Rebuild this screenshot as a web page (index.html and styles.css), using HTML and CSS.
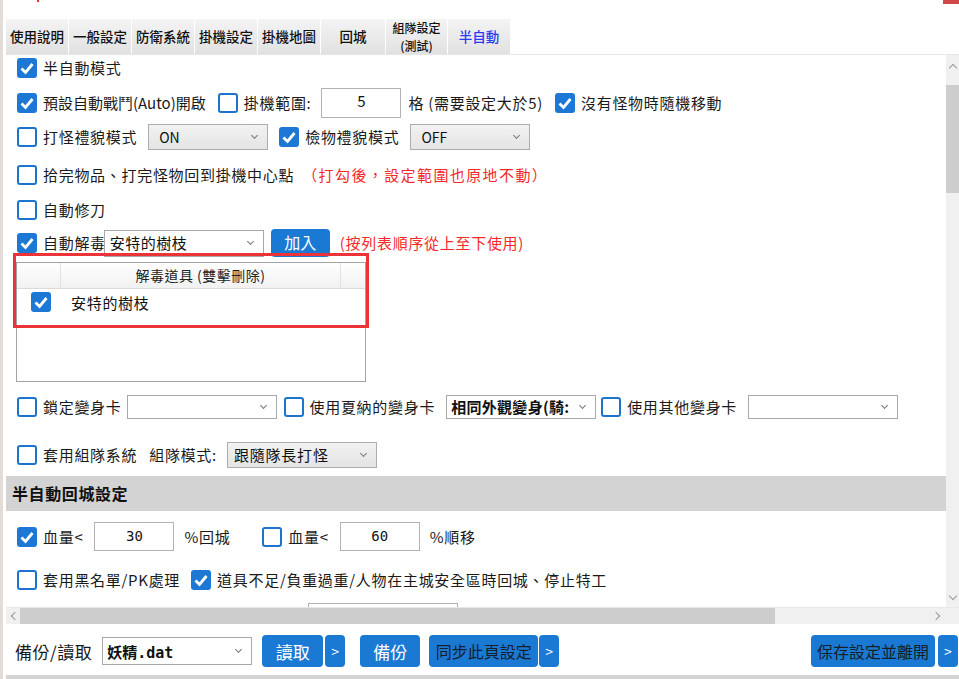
FILE: index.html
```html
<!DOCTYPE html>
<html lang="zh-Hant">
<head>
    <meta charset="UTF-8">
    <title>半自動設定</title>
    <link rel="stylesheet" href="styles.css">
</head>
<body>
    <div class="window">
        <!-- 標題列殘影 -->
        <div class="titlebar">
            <span class="tick"></span>
            <span class="close"></span>
        </div>

        <!-- 分頁 -->
        <div class="tabs">
            <div class="tab">使用說明</div>
            <div class="tab">一般設定</div>
            <div class="tab">防衛系統</div>
            <div class="tab">掛機設定</div>
            <div class="tab">掛機地圖</div>
            <div class="tab wide">回城</div>
            <div class="tab two-line"><span>組隊設定</span><span>(測試)</span></div>
            <div class="tab active">半自動</div>
        </div>

        <div class="panel">
            <div class="view">
                <div class="row r1">
                    <span class="cb on"><svg viewBox="0 0 20 20"><path d="M4.5 10.5 L8.5 14.5 L15.5 6"/></svg></span>
                    <span class="lbl">半自動模式</span>
                </div>

                <div class="row r2">
                    <span class="cb on"><svg viewBox="0 0 20 20"><path d="M4.5 10.5 L8.5 14.5 L15.5 6"/></svg></span>
                    <span class="lbl tight">預設自動戰鬥(Auto)開啟</span>
                    <span class="cb ml12"></span>
                    <span class="lbl">掛機範圍:</span>
                    <span class="field num-in ml10">5</span>
                    <span class="lbl ml7">格 (需要設定大於5)</span>
                    <span class="cb on ml12"><svg viewBox="0 0 20 20"><path d="M4.5 10.5 L8.5 14.5 L15.5 6"/></svg></span>
                    <span class="lbl">沒有怪物時隨機移動</span>
                </div>

                <div class="row r3">
                    <span class="cb"></span>
                    <span class="lbl">打怪禮貌模式</span>
                    <span class="select gray mode ml11">ON</span>
                    <span class="cb on ml11"><svg viewBox="0 0 20 20"><path d="M4.5 10.5 L8.5 14.5 L15.5 6"/></svg></span>
                    <span class="lbl">檢物禮貌模式</span>
                    <span class="select gray mode ml11">OFF</span>
                </div>

                <div class="row r4">
                    <span class="cb"></span>
                    <span class="lbl">拾完物品、打完怪物回到掛機中心點</span>
                    <span class="warn wide-warn ml8">（打勾後，設定範圍也原地不動）</span>
                </div>

                <div class="row r5">
                    <span class="cb"></span>
                    <span class="lbl">自動修刀</span>
                </div>

                <div class="row r6">
                    <span class="cb on"><svg viewBox="0 0 20 20"><path d="M4.5 10.5 L8.5 14.5 L15.5 6"/></svg></span>
                    <span class="lbl">自動解毒</span>
                    <span class="select cure">安特的樹枝</span>
                    <span class="btn add ml7">加入</span>
                    <span class="warn ml10">(按列表順序從上至下使用)</span>
                </div>

                <div class="list-wrap">
                    <div class="list">
                        <div class="list-head">
                            <span class="col-a"></span>
                            <span class="col-b">解毒道具 (雙擊刪除)</span>
                            <span class="col-c"></span>
                        </div>
                        <div class="list-item">
                            <span class="cb on"><svg viewBox="0 0 20 20"><path d="M4.5 10.5 L8.5 14.5 L15.5 6"/></svg></span>
                            <span class="item-name">安特的樹枝</span>
                        </div>
                    </div>
                    <div class="mark"></div>
                </div>

                <div class="row r7">
                    <span class="cb"></span>
                    <span class="lbl">鎖定變身卡</span>
                    <span class="select card ml5"></span>
                    <span class="cb ml7"></span>
                    <span class="lbl">使用夏納的變身卡</span>
                    <span class="select card bold ml11">相同外觀變身(騎:</span>
                    <span class="cb ml5"></span>
                    <span class="lbl">使用其他變身卡</span>
                    <span class="select card ml11"></span>
                </div>

                <div class="row r8">
                    <span class="cb"></span>
                    <span class="lbl">套用組隊系統</span>
                    <span class="lbl ml12">組隊模式:</span>
                    <span class="select gray party ml10">跟隨隊長打怪</span>
                </div>

                <div class="section">半自動回城設定</div>

                <div class="row r9">
                    <span class="cb on"><svg viewBox="0 0 20 20"><path d="M4.5 10.5 L8.5 14.5 L15.5 6"/></svg></span>
                    <span class="lbl">血量&lt;</span>
                    <span class="field mono ml11">30</span>
                    <span class="lbl ml10">%回城</span>
                    <span class="cb ml32"></span>
                    <span class="lbl">血量&lt;</span>
                    <span class="field mono ml11">60</span>
                    <span class="lbl ml10">%順移</span>
                </div>

                <div class="row r10">
                    <span class="cb"></span>
                    <span class="lbl">套用黑名單/PK處理</span>
                    <span class="cb on ml11"><svg viewBox="0 0 20 20"><path d="M4.5 10.5 L8.5 14.5 L15.5 6"/></svg></span>
                    <span class="lbl">道具不足/負重過重/人物在主城安全區時回城、停止特工</span>
                </div>

                <div class="row r11">
                    <span class="field cut"></span>
                </div>
            </div>

            <!-- 垂直捲軸 -->
            <div class="vbar">
                <span class="chev up"></span>
                <div class="vthumb"></div>
                <span class="chev down"></span>
            </div>

            <!-- 水平捲軸 -->
            <div class="hbar">
                <span class="chev left"></span>
                <div class="hthumb"></div>
                <span class="chev right"></span>
            </div>
        </div>

        <!-- 備份/讀取 -->
        <div class="footer">
            <span class="foot-lbl">備份/讀取</span>
            <span class="select file ml10">妖精.dat</span>
            <span class="btn load ml10">讀取</span>
            <span class="btn more ml2">&gt;</span>
            <span class="btn backup ml15">備份</span>
            <span class="btn sync dark ml9">同步此頁設定</span>
            <span class="btn more ml1">&gt;</span>
            <span class="spacer"></span>
            <span class="btn save dark">保存設定並離開</span>
            <span class="btn more ml3">&gt;</span>
        </div>
    </div>
</body>
</html>
```

FILE: styles.css
```css
body {
    margin: 0;
    background: #fff;
    font-family: "Noto Sans CJK TC", "Noto Sans", sans-serif;
    color: #111;
    overflow: hidden;
}
.window {
    width: 959px;
    height: 679px;
    border-left: 3px solid #e2dcd6;
    box-sizing: border-box;
    padding-left: 3px;
    position: relative;
    background: #fff;
}
.titlebar {
    height: 19px;
}
.tick {
    position: absolute;
    left: 34px;
    top: 0;
    width: 2px;
    height: 2px;
    background: #d23a2a;
}
.close {
    position: absolute;
    right: 0;
    top: 0;
    width: 16px;
    height: 4px;
    background: #d04848;
}

/* 分頁 */
.tabs {
    display: flex;
    height: 35px;
    border-bottom: 1px solid #e6e6e6;
}
.tab {
    width: 62px;
    margin-right: 1px;
    background: linear-gradient(#f4f4f4, #e1e1e1);
    font-size: 13.5px;
    font-weight: 500;
    line-height: 1.2;
    display: flex;
    align-items: center;
    justify-content: center;
    text-align: center;
    color: #111;
}
.tab.wide {
    width: 64px;
}
.tab.two-line {
    width: 61px;
    flex-direction: column;
    font-size: 12px;
    line-height: 17.5px;
}
.tab.active {
    color: #2a3cf0;
}

/* 內容區 */
.panel {
    display: grid;
    grid-template-columns: 940px 13px;
    grid-template-rows: 552px 17px;
}
.view {
    overflow: hidden;
    background: #fff;
}
.row {
    display: flex;
    align-items: center;
    padding-left: 11px;
    font-size: 15px;
    line-height: 1.2;
    white-space: nowrap;
}
.r1 { margin-top: 2px; height: 22px; }
.r2 { margin-top: 9px; height: 30px; }
.r3 { margin-top: 6px; height: 26px; }
.r4 { margin-top: 13px; height: 24px; }
.r5 { margin-top: 11px; height: 24px; }
.r6 { margin-top: 7px; height: 28px; }
.r7 { margin-top: 13px; height: 24px; }
.r8 { margin-top: 23px; height: 26px; }
.r9 { margin-top: 11px; height: 29px; }
.r10 { margin-top: 17px; height: 24px; }
.r11 { margin-top: 11px; height: 26px; }

.ml1 { margin-left: 1px; }
.ml2 { margin-left: 2px; }
.ml3 { margin-left: 3px; }
.ml5 { margin-left: 5px; }
.ml7 { margin-left: 7px; }
.ml8 { margin-left: 8px; }
.ml9 { margin-left: 9px; }
.ml10 { margin-left: 10px; }
.ml11 { margin-left: 11px; }
.ml12 { margin-left: 12px; }
.ml15 { margin-left: 15px; }
.ml32 { margin-left: 32px; }

/* 核取方塊 */
.cb {
    flex: none;
    width: 20px;
    height: 20px;
    box-sizing: border-box;
    border: 2px solid #1c74cf;
    border-radius: 3px;
    background: #fff;
    display: inline-flex;
}
.cb.on {
    background: #1c78d4;
    border-color: #1c78d4;
}
.cb svg {
    width: 20px;
    height: 20px;
    margin: -2px;
}
.cb path {
    fill: none;
    stroke: #fff;
    stroke-width: 2.8;
}
.lbl {
    margin-left: 6px;
    letter-spacing: 0.7px;
    color: #1a1a1a;
}
.lbl.tight {
    letter-spacing: 0;
}
.row .lbl.ml7 { margin-left: 7px; }
.row .lbl.ml10 { margin-left: 10px; }
.row .lbl.ml12 { margin-left: 12px; }
.warn {
    color: #f42a2a;
    letter-spacing: 0.7px;
}
.wide-warn {
    letter-spacing: 1.4px;
}

/* 輸入框與下拉選單 */
.field {
    flex: none;
    width: 80px;
    height: 29px;
    box-sizing: border-box;
    border: 1px solid #b2b2b2;
    background: #fff;
    display: flex;
    align-items: center;
    justify-content: center;
    font-size: 15px;
}
.num-in {
    height: 30px;
    padding-bottom: 4px;
}
.mono {
    font-family: "DejaVu Sans Mono", "Liberation Mono", monospace;
    font-size: 14px;
}
.field.cut {
    margin-left: 291px;
    width: 150px;
    height: 26px;
}
.select {
    flex: none;
    position: relative;
    box-sizing: border-box;
    border: 1px solid #a8a8a8;
    background: #fff;
    display: flex;
    align-items: center;
    padding-left: 6px;
    font-size: 15px;
    color: #111;
}
.select::after {
    content: "";
    position: absolute;
    right: 10px;
    top: 50%;
    width: 4px;
    height: 4px;
    border-right: 1px solid #777;
    border-bottom: 1px solid #777;
    transform: translateY(-4px) rotate(45deg);
}
.select.gray {
    background: linear-gradient(#f2f2f2, #e4e4e4);
    border-color: #adadad;
}
.mode {
    width: 120px;
    height: 26px;
    padding-left: 10px;
    font-size: 14px;
}
.cure {
    width: 160px;
    height: 27px;
    margin-left: -2px;
    padding-left: 5px;
    letter-spacing: 0.5px;
}
.card {
    width: 150px;
    height: 24px;
}
.card.bold {
    font-weight: 700;
    padding-left: 4px;
    letter-spacing: 0.3px;
}
.party {
    width: 150px;
    height: 26px;
    letter-spacing: 0.8px;
}

/* 按鈕 */
.btn {
    flex: none;
    background: #1a7ad3;
    color: #fff;
    border-radius: 4px;
    display: flex;
    align-items: center;
    justify-content: center;
    font-size: 17px;
    height: 32px;
}
.btn.add {
    width: 59px;
    height: 28px;
    font-size: 16px;
}
.btn.dark {
    color: #15202c;
}

/* 解毒清單 */
.list-wrap {
    position: relative;
    margin: 5px 0 0 10px;
    width: 350px;
}
.list {
    height: 120px;
    box-sizing: border-box;
    border: 1px solid #a0a4a8;
    background: #fff;
}
.list-head {
    display: flex;
    height: 25px;
    background: linear-gradient(#fff, #f1f1f1);
    border-bottom: 1px solid #dadada;
    font-size: 14px;
    line-height: 25px;
    color: #222;
}
.col-a {
    width: 43px;
    border-right: 1px solid #e2e2e2;
}
.col-b {
    width: 279px;
    text-align: center;
    border-right: 1px solid #e2e2e2;
    letter-spacing: 0.5px;
}
.list-item {
    display: flex;
    align-items: center;
    height: 26px;
    padding-left: 14px;
    font-size: 15px;
}
.item-name {
    margin-left: 20px;
    letter-spacing: 0.7px;
}
.mark {
    position: absolute;
    left: -3px;
    top: -9px;
    width: 356px;
    height: 75px;
    box-sizing: border-box;
    border: 3px solid #ec3338;
}

/* 區段標題 */
.section {
    margin-top: 8px;
    height: 35px;
    background: #d3d3d3;
    font-size: 16px;
    font-weight: 700;
    line-height: 35px;
    padding-left: 6px;
    letter-spacing: 0.6px;
    color: #111;
}

/* 捲軸 */
.vbar {
    background: #f0f0f0;
    position: relative;
}
.vthumb {
    position: absolute;
    left: 0;
    right: 0;
    top: 30px;
    height: 108px;
    background: #cdcdcd;
}
.hbar {
    grid-column: 1 / 3;
    background: #f0f0f0;
    position: relative;
    border-top: 1px solid #e8e8e8;
    box-sizing: border-box;
}
.hthumb {
    position: absolute;
    left: 14px;
    width: 755px;
    top: 0;
    bottom: 0;
    background: #cdcdcd;
}
.chev {
    position: absolute;
    width: 5px;
    height: 5px;
    border-left: 1px solid #999;
    border-top: 1px solid #999;
}
.chev.up {
    left: 4px;
    top: 10px;
    transform: rotate(45deg);
}
.chev.down {
    left: 4px;
    bottom: 8px;
    transform: rotate(225deg);
}
.chev.left {
    left: 6px;
    top: 5px;
    transform: rotate(-45deg);
}
.chev.right {
    right: 20px;
    top: 5px;
    transform: rotate(135deg);
}

/* 底部列 */
.footer {
    display: flex;
    align-items: center;
    height: 55px;
    padding: 3px 1px 0 9px;
    box-sizing: border-box;
    border-bottom: 4px solid #d4d4d4;
}
.foot-lbl {
    font-size: 17px;
    letter-spacing: 0.5px;
    color: #1a1a1a;
}
.file {
    width: 150px;
    height: 28px;
    font-family: "DejaVu Sans Mono", "Noto Sans CJK TC", monospace;
    font-weight: 700;
    font-size: 15px;
    padding-left: 4px;
}
.load { width: 61px; }
.more { width: 20px; font-size: 14px; }
.backup { width: 60px; }
.sync { width: 109px; font-size: 16px; }
.save { width: 124px; font-size: 16px; }
.spacer { flex: 1; }
```
